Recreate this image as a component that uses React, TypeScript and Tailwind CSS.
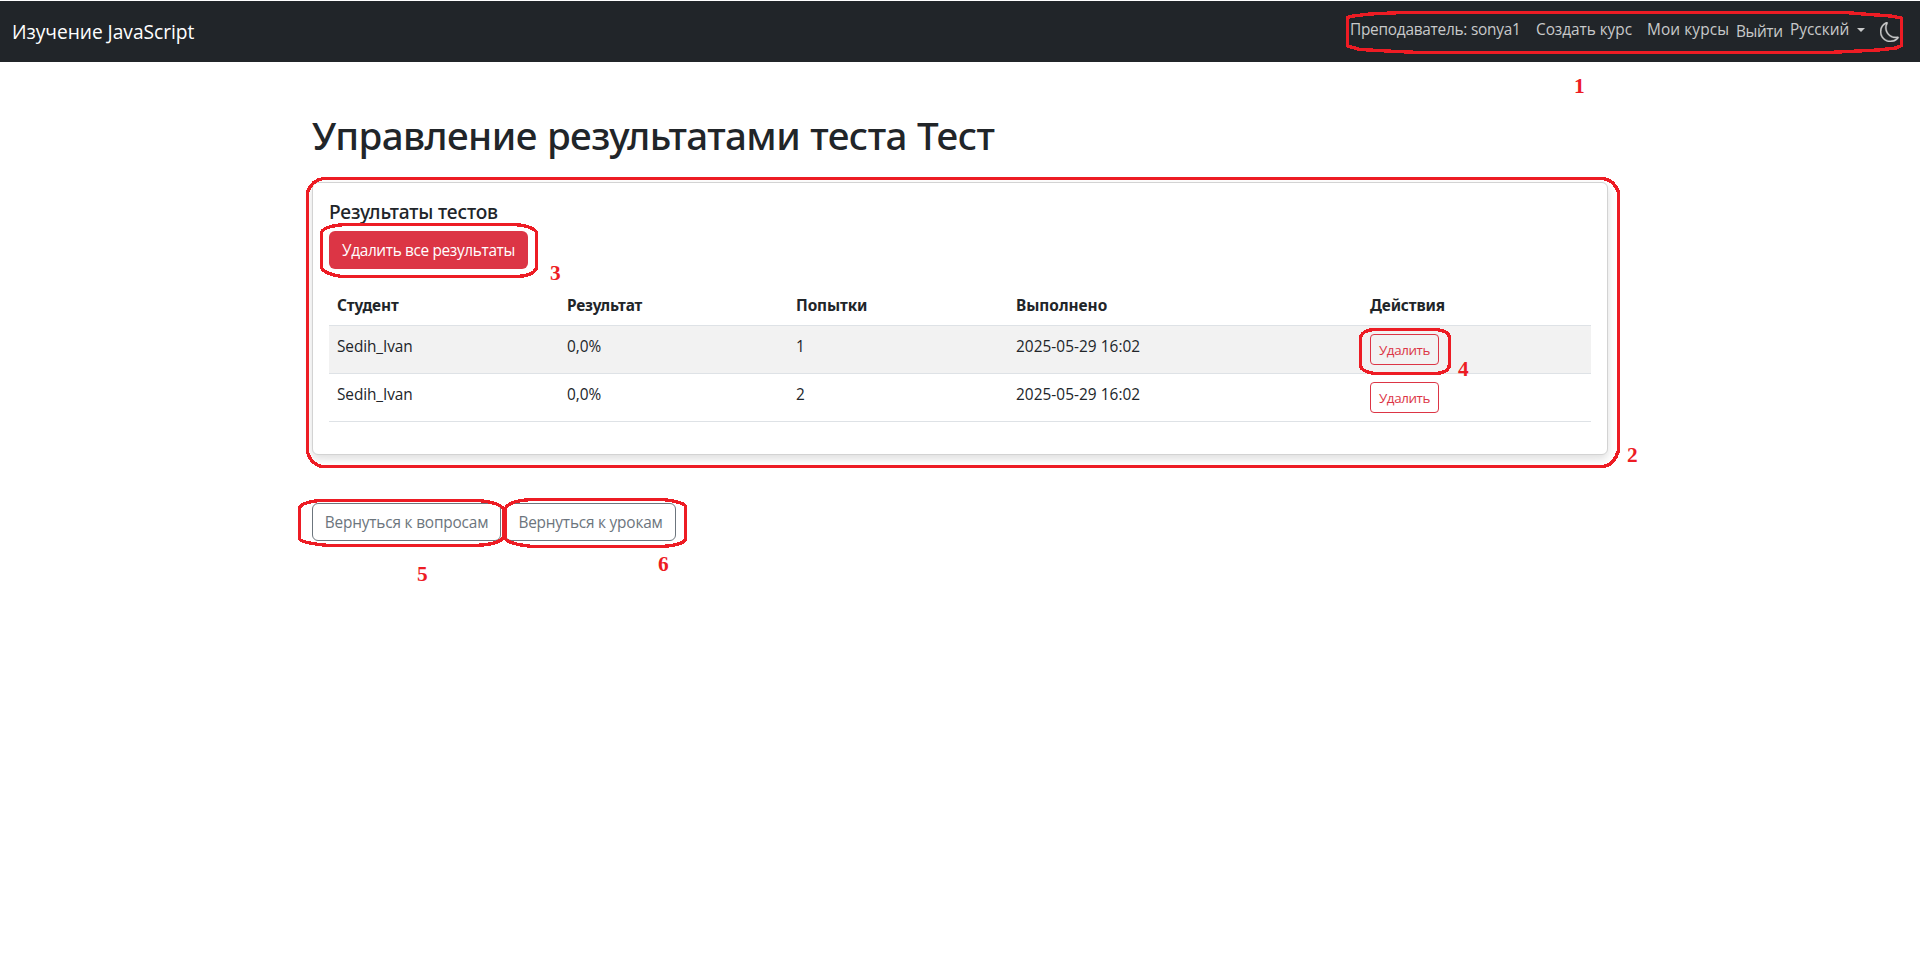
import { BsMoon } from "react-icons/bs";

const results = [
  { student: "Sedih_Ivan", score: "0,0%", attempt: "1", date: "2025-05-29 16:02" },
  { student: "Sedih_Ivan", score: "0,0%", attempt: "2", date: "2025-05-29 16:02" },
];

const outlines = [
  "M1347.5 17.5 L1353 16 L1370 14 L1403 12.5 H1845 L1870 14.5 L1891 16 L1901.5 18 V45.5 L1896 48 L1878 50 L1828 52.5 H1419 L1387 51 L1360 49.5 L1347.5 46 Z",
  "M323.5 178.5 H1603 Q1614 180 1618.5 192 V450 Q1615 464 1604 466.5 H321 Q310 463 307.5 452 V192 Q312 180 323.5 178.5 Z",
  "M345 224.5 H512 Q531 225 536.5 232 V268 Q533 276 517 276.5 H341 Q325 274 321.5 268 V232 Q325 226 345 224.5 Z",
  "M1374 329.5 H1437 Q1448 331 1449.5 337 V365 Q1448 373 1436 373.5 H1374 Q1361 371 1360.5 366 V337 Q1363 330 1374 329.5 Z",
  "M320 500.5 H477 Q499 502 503.5 509 V538 Q497 545 473 545.5 H329 Q302 543 299.5 539 V508 Q302 502 320 500.5 Z",
  "M534 499.5 H663 Q683 502 685.5 506 V540 Q680 546 659 546.5 H532 Q509 544 505.5 539 V508 Q510 500 534 499.5 Z",
];

const marks: [string, number, number][] = [
  ["1", 1574, 93],
  ["2", 1627, 462],
  ["3", 550, 280],
  ["4", 1458, 376],
  ["5", 417, 581],
  ["6", 658, 571],
];

function Annotations() {
  return (
    <svg
      className="pointer-events-none absolute top-0 left-0"
      width="1920"
      height="961"
      viewBox="0 0 1920 961"
    >
      <g fill="none" stroke="#ed1c24" strokeWidth="3.4" strokeLinejoin="round" shapeRendering="crispEdges">
        {outlines.map((d) => (
          <path key={d} d={d} />
        ))}
      </g>
      <g fill="#ed1c24" fontFamily="'Liberation Serif', serif" fontWeight="700" fontSize="21.33">
        {marks.map(([label, x, y]) => (
          <text key={label} x={x} y={y}>
            {label}
          </text>
        ))}
      </g>
    </svg>
  );
}

function Navbar() {
  return (
    <nav className="mt-px flex h-[61px] items-start justify-between bg-[#212529] pr-5 pl-3 text-[15.4px] leading-6 text-[#c8c9ca]">
      <a className="pt-4 text-[19.2px] leading-[30px] tracking-[-0.04px] text-white">Изучение JavaScript</a>
      <div className="flex items-start pt-[17px]">
        <a className="w-[186px] tracking-[-0.25px]">Преподаватель: sonya1</a>
        <a className="w-[111px] tracking-[-0.05px]">Создать курс</a>
        <a className="w-[89px] tracking-[0.1px]">Мои курсы</a>
        <a className="w-[54px] pt-0.5 tracking-[-0.4px]">Выйти</a>
        <a className="flex w-[90px]">
          Русский
          <span className="mt-[10px] ml-2 h-0 w-0 border-x-[4.5px] border-t-[4.5px] border-x-transparent border-t-[#c8c9ca]" />
        </a>
        <BsMoon className="mt-[4px] h-5 w-5 stroke-current stroke-[0.3]" />
      </div>
    </nav>
  );
}

function ResultsTable() {
  return (
    <table className="mt-[15px] mb-4 w-[1262px] table-fixed border-collapse text-left text-[15.4px] leading-6">
      <colgroup>
        <col className="w-[230px]" />
        <col className="w-[229px]" />
        <col className="w-[220px]" />
        <col className="w-[354px]" />
        <col className="w-[229px]" />
      </colgroup>
      <thead className="font-['Noto_Sans',sans-serif]">
        <tr className="h-[41px] border-b border-[#dee2e6] align-top">
          <th className="px-2 pt-[10px] font-bold tracking-[-0.1px]">Студент</th>
          <th className="px-2 pt-[10px] font-bold tracking-[-0.15px]">Результат</th>
          <th className="px-2 pt-[10px] font-bold tracking-[-0.1px]">Попытки</th>
          <th className="px-2 pt-[10px] font-bold">Выполнено</th>
          <th className="px-2 pt-[10px] font-bold tracking-[-0.15px]">Действия</th>
        </tr>
      </thead>
      <tbody>
        {results.map((r) => (
          <tr key={r.attempt} className="h-12 border-b border-[#dee2e6] align-top odd:bg-[#f2f2f2]">
            <td className="px-2 pt-[9px] tracking-[-0.1px]">{r.student}</td>
            <td className="px-2 pt-[9px]">{r.score}</td>
            <td className="px-2 pt-[9px]">{r.attempt}</td>
            <td className="px-2 pt-[9px] tracking-[0.04px]">{r.date}</td>
            <td className="px-2 pt-2">
              <button className="block h-[31px] w-[69px] rounded border border-[#dc3545] pt-0.5 text-[13.4px] leading-[21px] tracking-[-0.4px] text-[#dc3545]">
                Удалить
              </button>
            </td>
          </tr>
        ))}
      </tbody>
    </table>
  );
}

export default function App() {
  return (
    <div className="relative flex h-[961px] flex-col overflow-hidden bg-white font-['Open_Sans','Noto_Sans',sans-serif] text-[#212529]">
      <Navbar />
      <main className="mx-auto w-[1296px] pt-[49px]">
        <h1 className="h-[71px] font-['Noto_Sans',sans-serif] text-[38.6px] leading-[48px] font-medium tracking-[-0.57px] [word-spacing:0.7px] whitespace-nowrap">
          Управление результатами теста Тест
        </h1>
        <section className="h-[273px] rounded-md border border-[#d3d3d3] bg-white p-4 shadow-[0_4px_8px_rgba(0,0,0,0.13)]">
          <h5 className="mb-[7px] pt-px font-['Noto_Sans',sans-serif] text-[19.2px] leading-6 font-medium tracking-[-0.17px]">
            Результаты тестов
          </h5>
          <button className="block h-[38px] w-[199px] rounded-md bg-[#dc3545] pt-0.5 text-[15.4px] leading-6 tracking-[-0.35px] text-white">
            Удалить все результаты
          </button>
          <ResultsTable />
        </section>
        <div className="mt-12 flex gap-1 text-[15.4px] leading-6 text-[#6c757d]">
          <button className="h-[38px] w-[189px] rounded-md border border-[#6c757d] pt-0.5 tracking-[-0.18px]">
            Вернуться к вопросам
          </button>
          <button className="h-[38px] w-[171px] rounded-md border border-[#6c757d] pt-0.5 tracking-[-0.2px]">
            Вернуться к урокам
          </button>
        </div>
      </main>
      <Annotations />
    </div>
  );
}
